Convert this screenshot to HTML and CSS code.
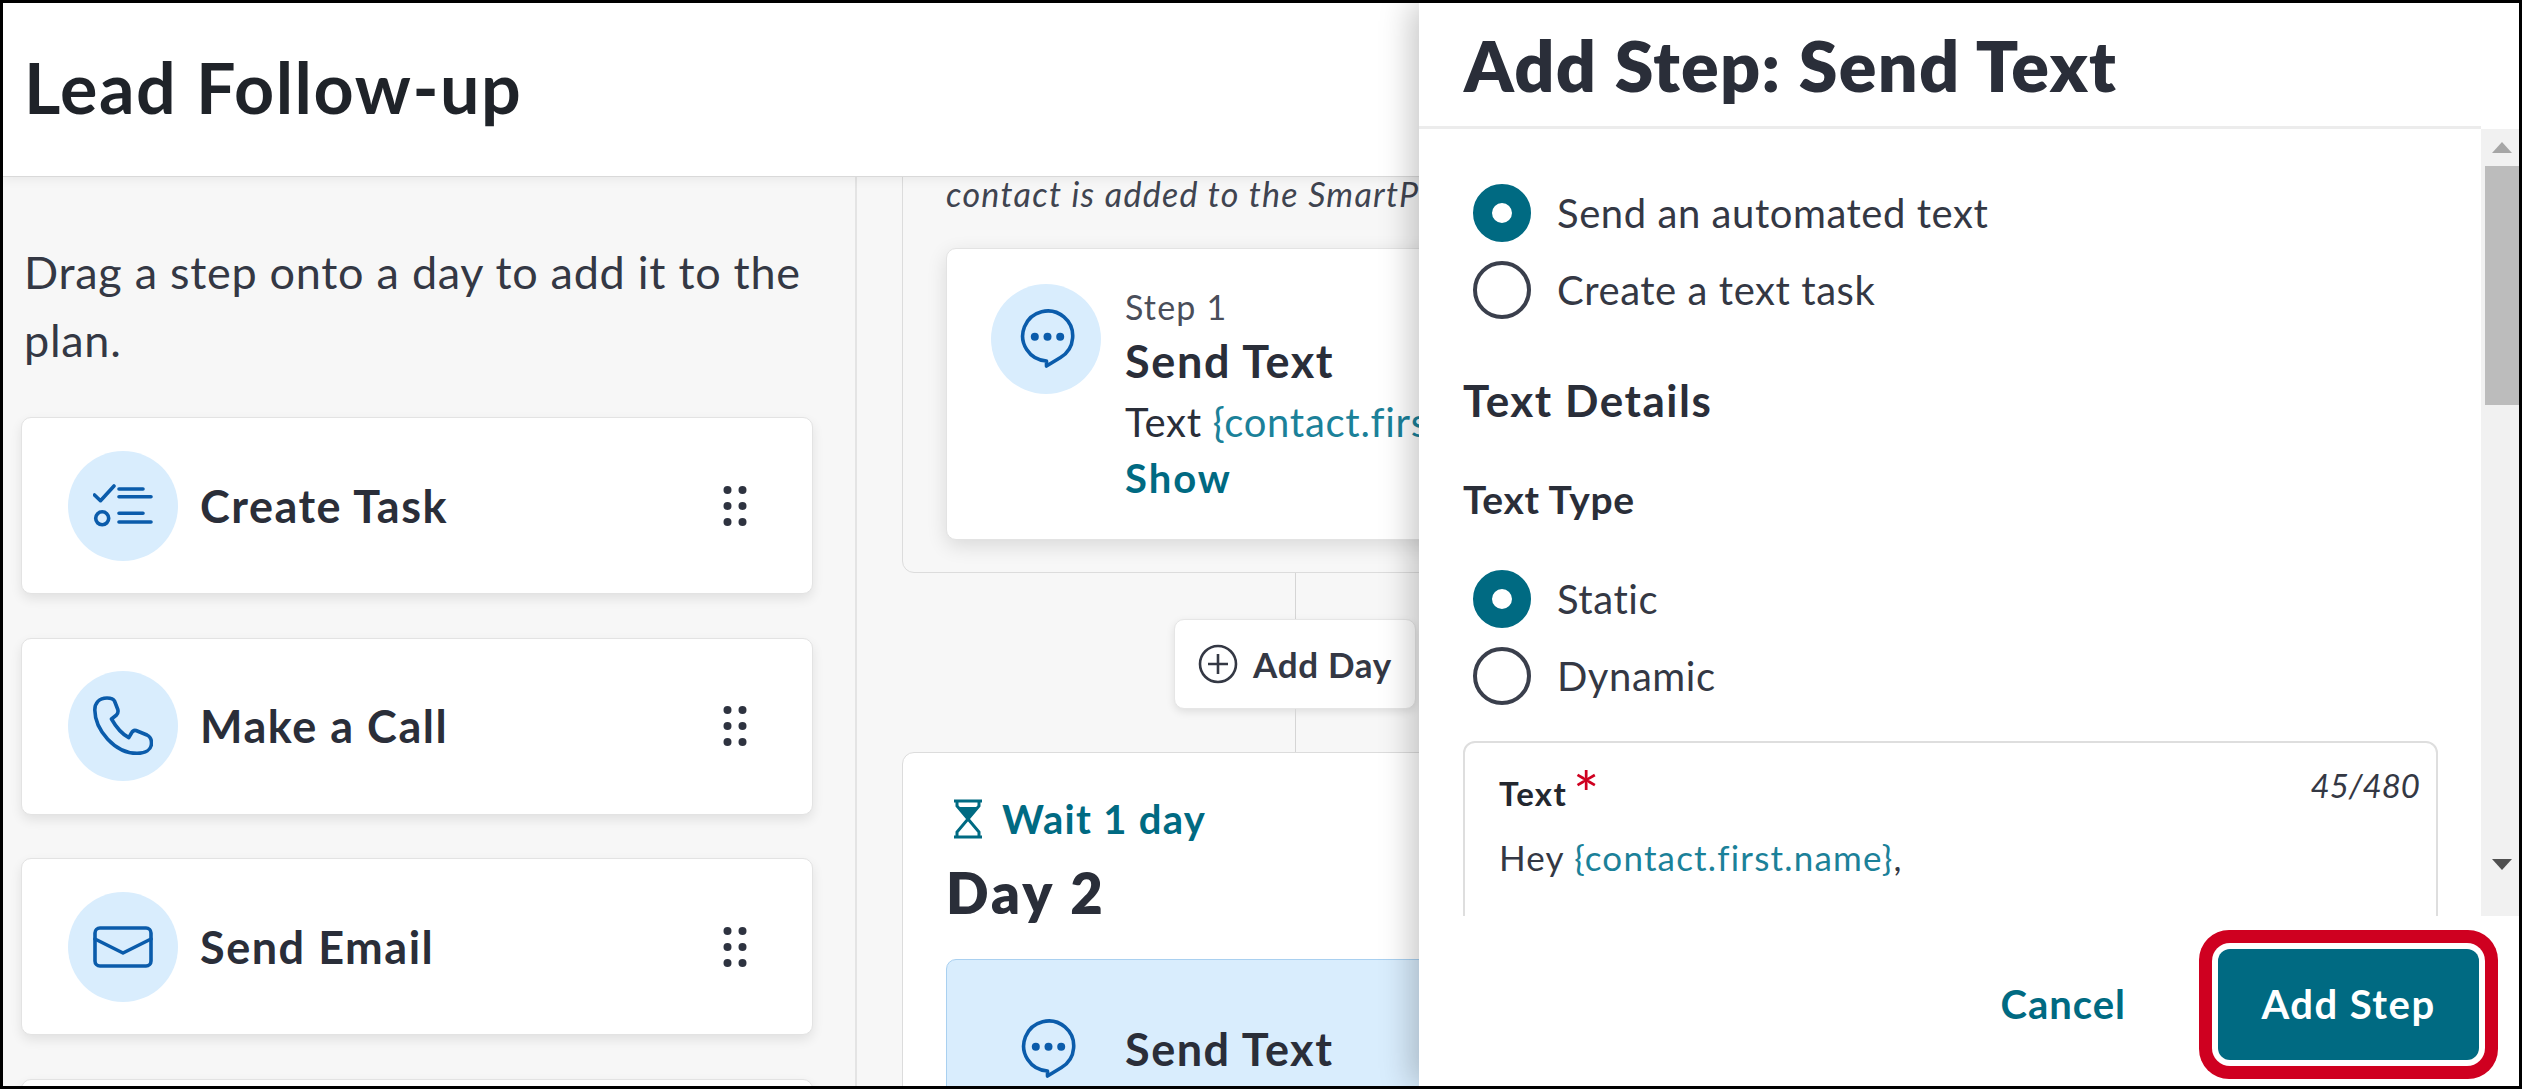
FILE: index.html
```html
<!DOCTYPE html>
<html lang="en">
<head>
<meta charset="utf-8">
<title>Lead Follow-up</title>
<link rel="stylesheet" href="styles.css">
</head>
<body>
<div class="frame">
  <header class="page-header"><h1 class="page-title">Lead Follow-up</h1></header>
  <main class="main">
    <aside class="palette">
      <p class="palette-intro">Drag a step onto a day to add it to the plan.</p>
      <div class="tool-card">
        <span class="icon-circle">
          <svg class="icon" viewBox="0 0 60 60"><path d="M1.5 19L7.5 24.7L21 10M26 13H50M26 20.7H58M26 37.3H50M26 46H58"/><circle cx="9.2" cy="42.3" r="6.5"/></svg>
        </span>
        <span class="tool-name">Create Task</span>
        <svg class="grip" viewBox="0 0 24 42"><circle cx="4.5" cy="5" r="4"/><circle cx="19.5" cy="5" r="4"/><circle cx="4.5" cy="21" r="4"/><circle cx="19.5" cy="21" r="4"/><circle cx="4.5" cy="37" r="4"/><circle cx="19.5" cy="37" r="4"/></svg>
      </div>
      <div class="tool-card">
        <span class="icon-circle">
          <svg class="icon" viewBox="0 0 60 60"><path d="M14 2C6 2 1.8 7 1.8 14C2 34 22 57.3 44 57.3C52 57.3 58.5 54 58.5 47C58.5 43 56 40 54 39L43 34.5C41 34 39.5 35 38.5 37L35.8 41.7C29 38 23 31 18.5 23L23.5 19C25 17.5 25.3 15.5 24.8 13.5L21.5 5C20.5 3 18 2 14 2Z"/></svg>
        </span>
        <span class="tool-name">Make a Call</span>
        <svg class="grip" viewBox="0 0 24 42"><circle cx="4.5" cy="5" r="4"/><circle cx="19.5" cy="5" r="4"/><circle cx="4.5" cy="21" r="4"/><circle cx="19.5" cy="21" r="4"/><circle cx="4.5" cy="37" r="4"/><circle cx="19.5" cy="37" r="4"/></svg>
      </div>
      <div class="tool-card">
        <span class="icon-circle">
          <svg class="icon" viewBox="0 0 60 60"><rect x="2" y="11" width="56" height="38" rx="5"/><path d="M2 22L30 36L58 22"/></svg>
        </span>
        <span class="tool-name">Send Email</span>
        <svg class="grip" viewBox="0 0 24 42"><circle cx="4.5" cy="5" r="4"/><circle cx="19.5" cy="5" r="4"/><circle cx="4.5" cy="21" r="4"/><circle cx="19.5" cy="21" r="4"/><circle cx="4.5" cy="37" r="4"/><circle cx="19.5" cy="37" r="4"/></svg>
      </div>
      <div class="tool-card"></div>
    </aside>
    <section class="plan">
      <div class="day day-first">
        <p class="day-note">contact is added to the SmartPlan</p>
        <div class="step-card">
          <span class="icon-circle">
            <svg class="icon" viewBox="0 0 60 60"><path d="M30.5 57V52A25 25 0 1 1 44.5 48.5Z"/><circle class="dot" cx="18.8" cy="27.7" r="4"/><circle class="dot" cx="31.5" cy="27.7" r="4"/><circle class="dot" cx="44.2" cy="27.7" r="4"/></svg>
          </span>
          <div class="step-info">
            <div class="step-num">Step 1</div>
            <div class="step-name">Send Text</div>
            <div class="step-body">Text <span class="token">{contact.first.name}</span></div>
            <div class="step-show">Show</div>
          </div>
        </div>
      </div>
      <div class="connector">
        <span class="line line-top"></span>
        <button class="add-day">
          <svg class="plus" viewBox="0 0 40 40"><circle cx="20" cy="20" r="18"/><path d="M20 10V30M10 20H30"/></svg>
          Add Day
        </button>
        <span class="line line-bottom"></span>
      </div>
      <div class="day day-second">
        <div class="wait">
          <svg class="hourglass" viewBox="0 0 30 40"><path class="sand" d="M6 8H24L15 20Z"/><path d="M1 2H29M1 38H29M4 2V7L15 20L4 33V38M26 2V7L15 20L26 33V38"/></svg>
          Wait 1 day
        </div>
        <h2 class="day-title">Day 2</h2>
        <div class="step-active">
          <svg class="icon" viewBox="0 0 60 60"><path d="M30.5 57V52A25 25 0 1 1 44.5 48.5Z"/><circle class="dot" cx="18.8" cy="27.7" r="4"/><circle class="dot" cx="31.5" cy="27.7" r="4"/><circle class="dot" cx="44.2" cy="27.7" r="4"/></svg>
          <span class="tool-name">Send Text</span>
        </div>
      </div>
    </section>
  </main>
  <div class="drawer">
    <div class="drawer-head"><h2 class="drawer-title">Add Step: Send Text</h2></div>
    <div class="drawer-body">
      <div class="drawer-content">
        <div class="radio-group">
          <label class="radio-row"><span class="radio radio-on"></span>Send an automated text</label>
          <label class="radio-row"><span class="radio"></span>Create a text task</label>
        </div>
        <h3 class="section-title">Text Details</h3>
        <h4 class="field-title">Text Type</h4>
        <div class="radio-group radio-group-type">
          <label class="radio-row"><span class="radio radio-on"></span>Static</label>
          <label class="radio-row"><span class="radio"></span>Dynamic</label>
        </div>
        <div class="text-box">
          <div class="text-box-head">
            <span class="text-label">Text<span class="req">*</span></span>
            <span class="counter">45/480</span>
          </div>
          <p class="text-value">Hey <span class="token">{contact.first.name}</span>,</p>
        </div>
      </div>
      <div class="scrollbar">
        <span class="arrow arrow-up"></span>
        <span class="thumb"></span>
        <span class="arrow arrow-down"></span>
      </div>
    </div>
    <div class="drawer-foot">
      <button class="btn-cancel">Cancel</button>
      <button class="btn-add">Add Step</button>
    </div>
  </div>
</div>
</body>
</html>
```

FILE: styles.css
```css
* { box-sizing: border-box; }
html, body { margin: 0; padding: 0; }
body {
  width: 2522px;
  height: 1089px;
  overflow: hidden;
  font-family: Lato, "Noto Sans", sans-serif;
  letter-spacing: 0.018em;
  color: #2a2e39;
}
h1, h2, h3, h4, p { margin: 0; }
button { font: inherit; letter-spacing: inherit; border: 0; background: none; padding: 0; }

.frame {
  position: relative;
  width: 2522px;
  height: 1089px;
  border: 3px solid #000;
  display: flex;
  flex-direction: column;
  overflow: hidden;
  background: #f7f7f7;
}
.page-header {
  position: relative;
  z-index: 2;
  flex: none;
  height: 174px;
  display: flex;
  align-items: center;
  padding: 0 0 5px 21px;
  background: #fff;
  border-bottom: 1px solid #d9d9d9;
  box-shadow: 0 3px 10px rgba(0,0,0,.06);
}
.page-title { font-size: 70px; font-weight: 700; letter-spacing: 0.022em; color: #1f2329; }

.main { flex: 1; display: flex; min-height: 0; }

.palette {
  flex: none;
  width: 854px;
  padding: 61px 0 0 19px;
  border-right: 2px solid #e4e4e4;
  overflow: hidden;
}
.palette-intro {
  width: 800px;
  margin: 0 0 43px 2px;
  font-size: 45px;
  line-height: 68px;
  letter-spacing: 0.016em;
  color: #343844;
}
.tool-card {
  width: 792px;
  height: 177px;
  margin: 0 0 43.5px -1px;
  padding: 0 65px 0 46px;
  display: flex;
  align-items: center;
  gap: 22px;
  background: #fff;
  border: 1px solid #e3e3e3;
  border-radius: 10px;
  box-shadow: 0 5px 12px rgba(0,0,0,.09);
}
.icon-circle {
  flex: none;
  width: 110px;
  height: 110px;
  display: flex;
  align-items: center;
  justify-content: center;
  border-radius: 50%;
  background: #d9edfd;
}
.icon {
  flex: none;
  width: 60px;
  height: 60px;
  fill: none;
  stroke: #0b5cab;
  stroke-width: 3.6;
  stroke-linecap: round;
  stroke-linejoin: round;
}
.icon .dot { fill: #0b5cab; stroke: none; }
.tool-name { font-size: 45px; font-weight: 700; letter-spacing: 0.034em; color: #2a2e39; }
.grip { flex: none; width: 24px; height: 42px; margin-left: auto; fill: #2e3340; }

.plan { flex: 1; min-width: 0; padding-left: 45px; overflow: hidden; }
.day {
  width: 786px;
  border: 1px solid #dcdcdc;
  border-radius: 12px;
}
.day-first { margin-top: -50px; padding: 46px 44px 32px 43px; background: #f7f7f7; }
.day-note {
  height: 40px;
  margin-bottom: 34px;
  font-size: 34px;
  line-height: 40px;
  font-style: italic;
  letter-spacing: 0.038em;
  color: #3f4450;
  white-space: nowrap;
}
.step-card {
  height: 292px;
  padding: 35px 0 0 44px;
  display: flex;
  gap: 24px;
  background: #fff;
  border: 1px solid #e3e3e3;
  border-radius: 10px;
  box-shadow: 0 6px 20px rgba(0,0,0,.12);
}
.step-info { padding-top: 3px; white-space: nowrap; }
.step-num { font-size: 34px; line-height: 40px; letter-spacing: 0.035em; color: #4a4e5a; }
.step-name { font-size: 45px; line-height: 68px; font-weight: 700; letter-spacing: 0.036em; }
.step-body { font-size: 40px; line-height: 54px; letter-spacing: 0.018em; }
.step-show { font-size: 40px; line-height: 58px; font-weight: 700; letter-spacing: 0.05em; color: #006a82; }
.token { color: #1b8199; }

.connector { height: 179px; width: 786px; display: flex; flex-direction: column; align-items: center; }
.line { display: block; width: 1px; background: #d5d5d5; }
.line-top { height: 46px; }
.line-bottom { height: 43px; }
.add-day {
  width: 242px;
  height: 90px;
  display: flex;
  align-items: center;
  justify-content: center;
  gap: 15px;
  font-size: 35px;
  font-weight: 700;
  letter-spacing: 0.02em;
  color: #343844;
  background: #fff;
  border: 1px solid #e6e6e6;
  border-radius: 10px;
  box-shadow: 0 3px 8px rgba(0,0,0,.1);
}
.plus { width: 40px; height: 40px; fill: none; stroke: #343844; stroke-width: 2.6; }

.day-second { height: 400px; padding: 46px 0 0 43px; background: #fff; }
.wait {
  height: 40px;
  margin-left: 7px;
  display: flex;
  align-items: center;
  gap: 19px;
  font-size: 40px;
  font-weight: 700;
  letter-spacing: 0.033em;
  color: #006a82;
}
.hourglass { width: 30px; height: 40px; fill: none; stroke: #006a82; stroke-width: 3; }
.hourglass .sand { fill: #006a82; stroke: none; }
.day-title { margin-top: 24px; margin-bottom: 36px; font-size: 56px; line-height: 60px; font-weight: 800; letter-spacing: 0.056em; }
.step-active {
  height: 180px;
  padding-left: 70px;
  display: flex;
  align-items: center;
  gap: 48px;
  background: #d9edfd;
  border: 1px solid #a9d0f0;
  border-radius: 10px;
}

.drawer {
  position: absolute;
  z-index: 3;
  top: 0;
  right: 0;
  bottom: 0;
  width: 1100px;
  display: flex;
  flex-direction: column;
  background: #fff;
  box-shadow: -8px 0 30px rgba(0,0,0,.22);
}
.drawer-head {
  flex: none;
  height: 126px;
  margin-right: 38px;
  padding-left: 45px;
  display: flex;
  align-items: center;
  border-bottom: 3px solid #ececec;
}
.drawer-title { font-size: 70px; font-weight: 800; letter-spacing: 0.018em; color: #2a2e39; }
.drawer-body { flex: none; height: 787px; display: flex; }
.drawer-content { flex: 1; min-width: 0; padding: 55px 0 0 44px; overflow: hidden; }
.radio-group { margin-left: 10px; display: flex; flex-direction: column; gap: 19px; }
.radio-row {
  height: 58px;
  display: flex;
  align-items: center;
  gap: 26px;
  font-size: 40px;
  letter-spacing: 0.014em;
  color: #343844;
}
.radio {
  flex: none;
  width: 58px;
  height: 58px;
  border: 4px solid #3a3f4c;
  border-radius: 50%;
}
.radio-on { border: 19px solid #006a82; }
.section-title { margin-top: 56px; font-size: 44px; line-height: 50px; font-weight: 700; letter-spacing: 0.035em; }
.field-title { margin-top: 49px; font-size: 39px; line-height: 50px; font-weight: 700; letter-spacing: 0.016em; }
.radio-group-type { margin-top: 46px; }
.text-box {
  width: 975px;
  height: 300px;
  margin-top: 36px;
  padding: 26px 16px 0 34px;
  border: 2px solid #dedede;
  border-radius: 12px;
}
.text-box-head { display: flex; justify-content: space-between; align-items: flex-start; }
.text-label { font-size: 33px; line-height: 48px; font-weight: 700; letter-spacing: 0.04em; color: #23272f; }
.req { margin-left: 6px; font-size: 62px; line-height: 30px; font-weight: 400; vertical-align: -11px; color: #cf0020; }
.counter { font-size: 33px; line-height: 32px; font-style: italic; letter-spacing: 0; color: #343844; }
.text-value { margin-top: 15px; font-size: 35px; line-height: 50px; letter-spacing: 0.034em; color: #343844; }

.scrollbar {
  flex: none;
  width: 38px;
  padding: 0 0 0 4px;
  display: flex;
  flex-direction: column;
  align-items: center;
  background: #f1f1f1;
}
.thumb { display: block; width: 34px; height: 239px; margin-top: 13px; background: #bcbcbc; }
.arrow { display: block; width: 0; height: 0; border-left: 10px solid transparent; border-right: 10px solid transparent; }
.arrow-up { margin-top: 13px; border-bottom: 11px solid #a6a6a6; }
.arrow-down { margin-top: 454px; border-top: 11px solid #505050; }

.drawer-foot {
  flex: 1;
  padding: 6px 40px 0 0;
  display: flex;
  align-items: center;
  justify-content: flex-end;
  gap: 92px;
}
.btn-cancel { font-size: 40px; font-weight: 700; letter-spacing: 0.025em; color: #006a82; }
.btn-add {
  width: 261px;
  height: 111px;
  font-size: 40px;
  font-weight: 700;
  letter-spacing: 0.037em;
  color: #fff;
  background: #006a82;
  border-radius: 12px;
  box-shadow: 0 0 0 6px #fff, 0 0 0 19px #cf0020;
}
```
